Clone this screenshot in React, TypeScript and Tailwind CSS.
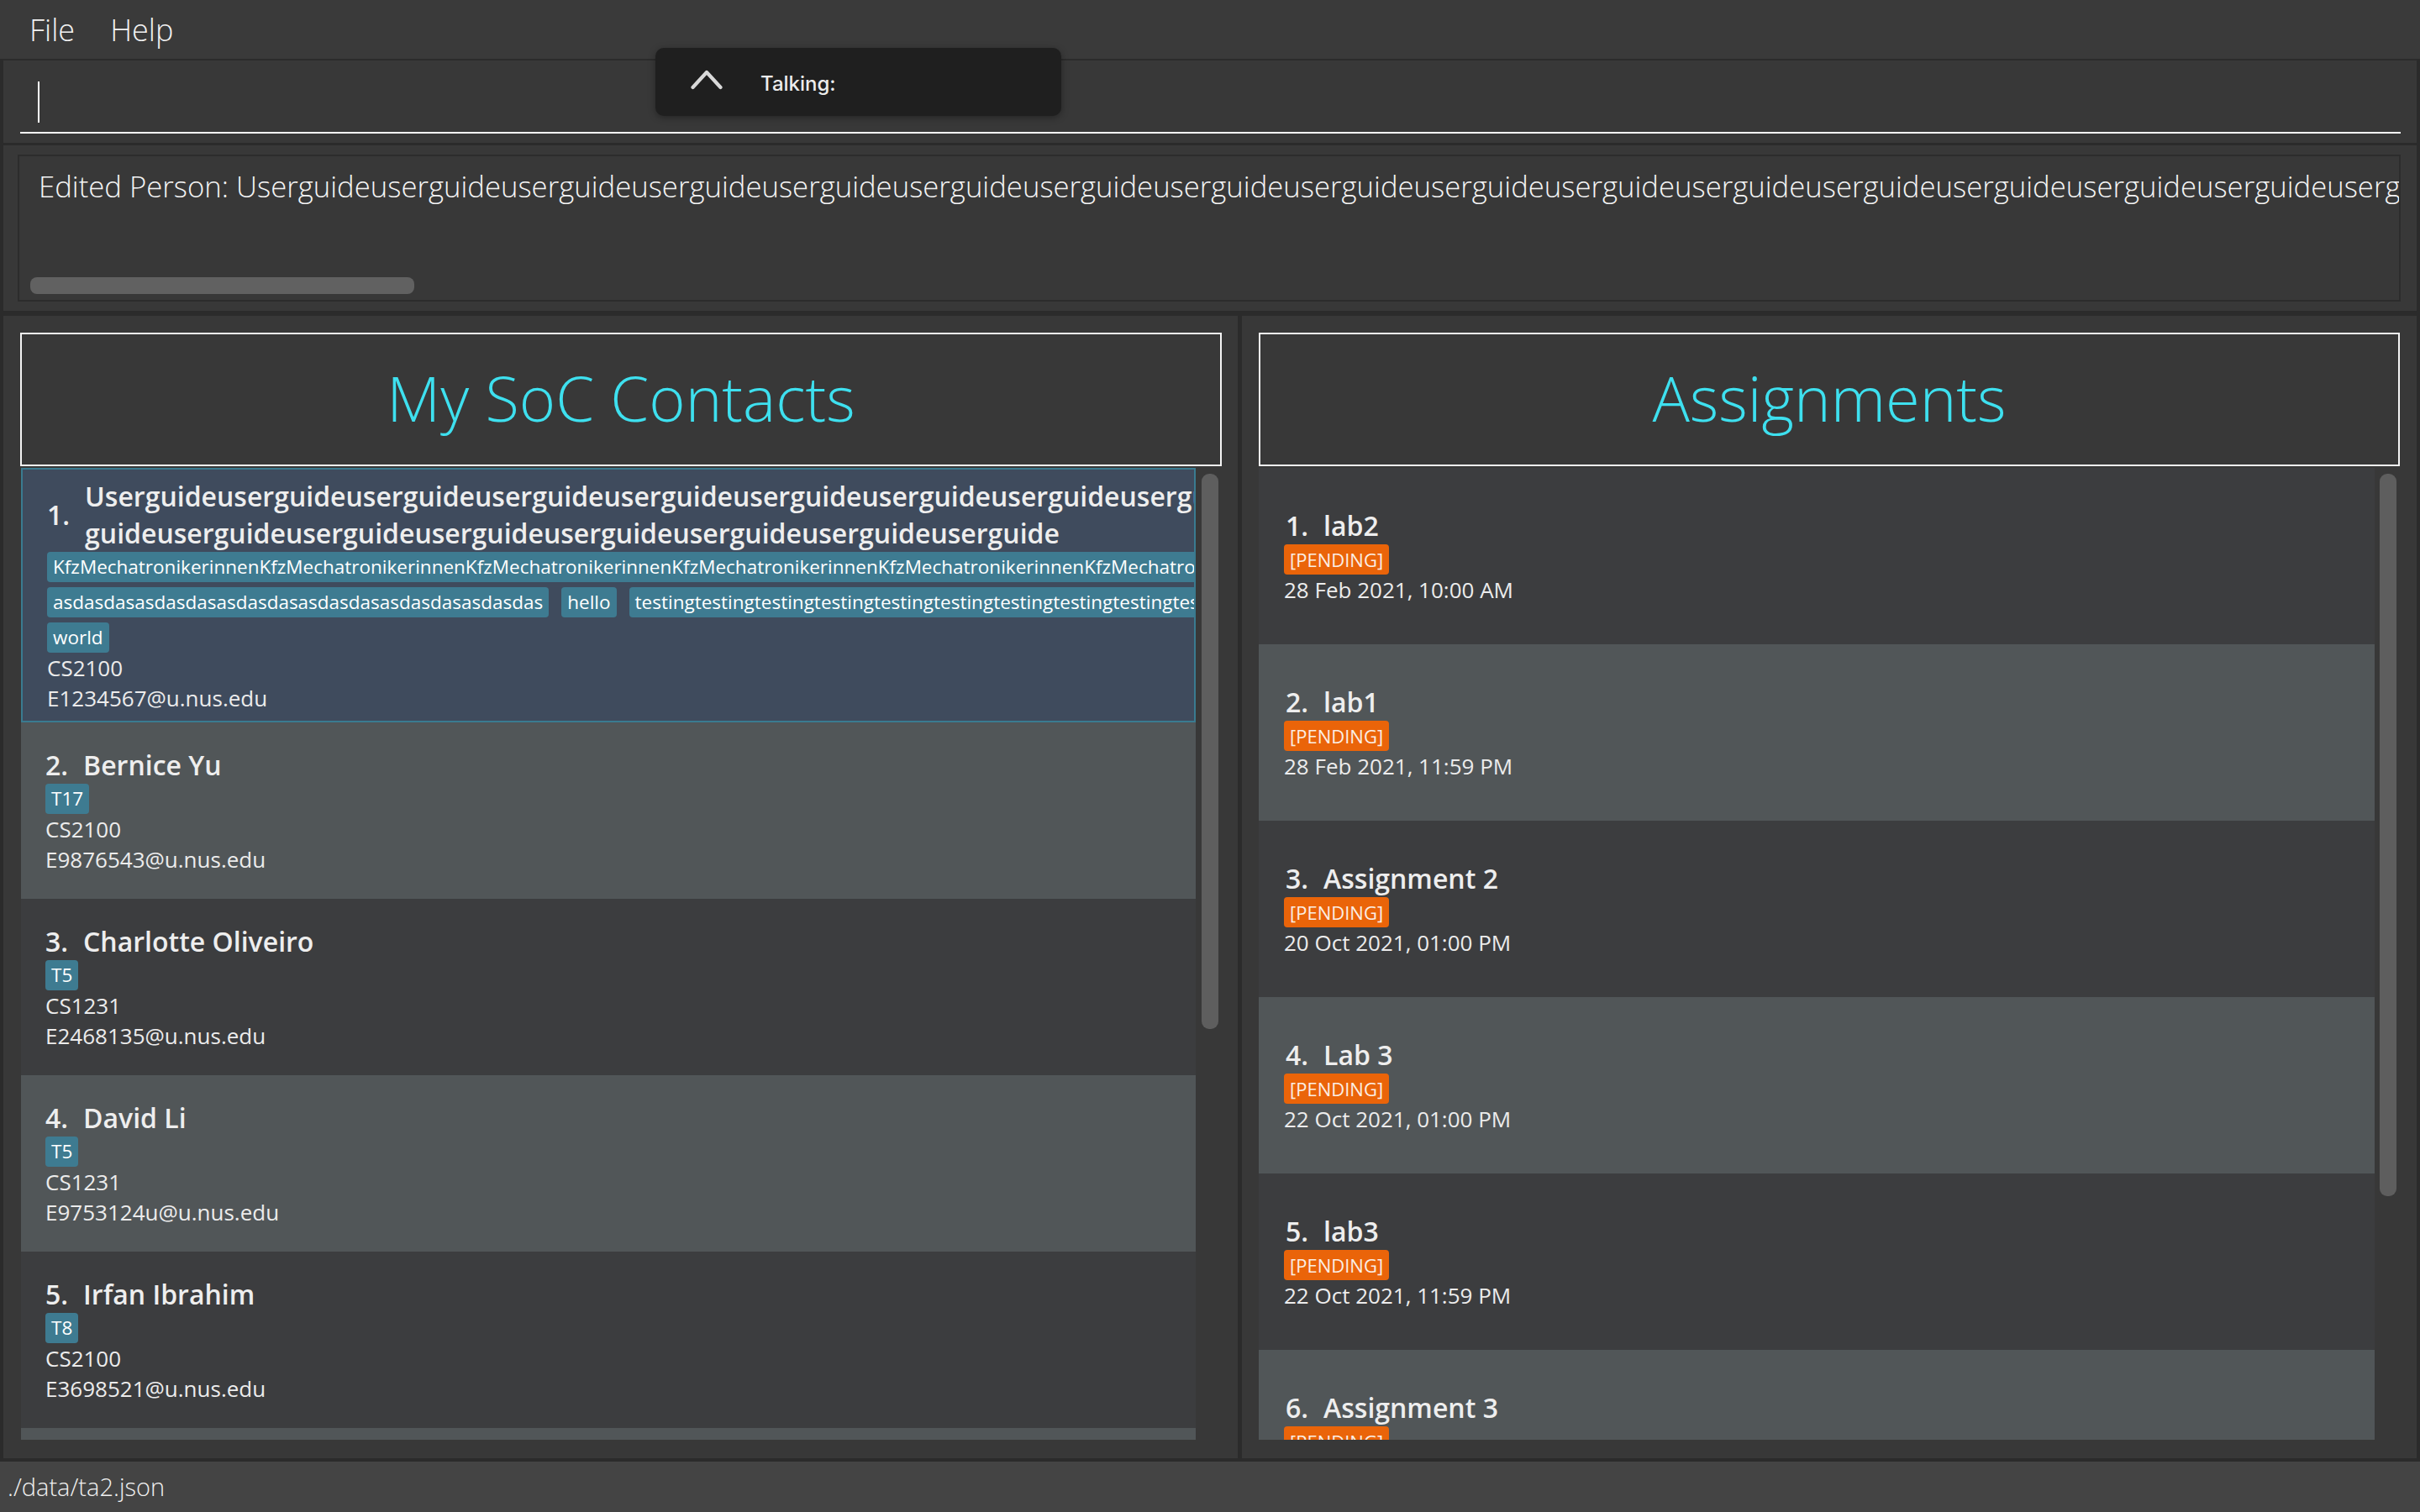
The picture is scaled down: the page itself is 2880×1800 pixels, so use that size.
import React from "react";

const contacts = [
  { id: 2, name: "Bernice Yu", tags: ["T17"], mod: "CS2100", email: "E9876543@u.nus.edu" },
  { id: 3, name: "Charlotte Oliveiro", tags: ["T5"], mod: "CS1231", email: "E2468135@u.nus.edu" },
  { id: 4, name: "David Li", tags: ["T5"], mod: "CS1231", email: "E9753124u@u.nus.edu" },
  { id: 5, name: "Irfan Ibrahim", tags: ["T8"], mod: "CS2100", email: "E3698521@u.nus.edu" },
  { id: 6, name: "Roy Balakrishnan", tags: ["T8"], mod: "CS2100", email: "E1357924@u.nus.edu" },
];

const assignments = [
  { id: 1, name: "lab2", date: "28 Feb 2021, 10:00 AM" },
  { id: 2, name: "lab1", date: "28 Feb 2021, 11:59 PM" },
  { id: 3, name: "Assignment 2", date: "20 Oct 2021, 01:00 PM" },
  { id: 4, name: "Lab 3", date: "22 Oct 2021, 01:00 PM" },
  { id: 5, name: "lab3", date: "22 Oct 2021, 11:59 PM" },
  { id: 6, name: "Assignment 3", date: "29 Oct 2021, 11:59 PM" },
];

function Tag({ text }: { text: string }) {
  return (
    <div className="h-[36px] leading-[36px] px-[7px] rounded-[4px] bg-[#3e7b91] text-[22.5px] text-white whitespace-nowrap shrink-0">
      {text}
    </div>
  );
}

function Detail({ text }: { text: string }) {
  return <div className="h-[36px] leading-[36px] text-[26px] text-[#ececec] whitespace-nowrap">{text}</div>;
}

export default function App() {
  const ug = "Userguide" + "userguide".repeat(14);
  const ug2 = "guide" + "userguide".repeat(7);
  const kfz = "KfzMechatronikerinnen".repeat(9);
  const asd = "asdasdas".repeat(6);
  const testing = "testing".repeat(20);
  const edited = "Edited Person: Userguide" + "userguide".repeat(30);

  return (
    <div className="w-[2880px] h-[1800px] bg-[#2b2b2b] flex flex-col overflow-hidden relative font-['Open_Sans',sans-serif]">
      {/* Menu bar */}
      <div className="h-[70px] bg-[#3a3a3a] flex items-center pl-[35px] pt-[2px] gap-[42px] text-[36px] font-light text-[#f2f2f2] shrink-0">
        <span>File</span>
        <span>Help</span>
      </div>

      {/* Command box */}
      <div className="mt-[2px] mx-[4px] h-[98px] bg-[#383838] shrink-0 flex flex-col pt-[25px]">
        <div className="ml-[41px] w-[2px] h-[49px] bg-white" />
        <div className="mt-[11px] ml-[20px] mr-[19px] h-[2px] bg-white" />
      </div>

      {/* Result display */}
      <div className="mt-[3px] mx-[4px] h-[197px] bg-[#383838] shrink-0 pt-[11px] pb-[11px] pl-[17px] pr-[19px]">
        <div className="h-full border-2 border-[#2c2c2c] flex flex-col overflow-hidden">
          <div className="pl-[23px] pt-[13px] text-[34.7px] font-light text-[#f4f4f4] whitespace-nowrap leading-[46px]">
            {edited}
          </div>
          <div className="flex-1" />
          <div className="ml-[13px] mb-[7px] w-[457px] h-[20px] rounded-[8px] bg-[#616161]" />
        </div>
      </div>

      {/* Main split */}
      <div className="mt-[6px] mx-[4px] h-[1360px] flex gap-[5px] shrink-0">
        {/* Left panel */}
        <div className="w-[1469px] h-full bg-[#383838] pt-[20px] pl-[20px] pr-[19px] flex flex-col">
          <div className="h-[159px] border-2 border-[#f4f4f4] flex items-center justify-center">
            <span className="text-[74px] font-light text-[#3ee0ef] leading-none pb-[4px]">My SoC Contacts</span>
          </div>
          <div className="mt-[2px] h-[1157px] flex overflow-hidden">
            <div className="ml-[1px] w-[1398px] flex flex-col">
              {/* Selected cell */}
              <div className="min-h-[303px] shrink-0 bg-[#3f4b5d] border-2 border-[#3a7b90] pl-[29px] py-[9px] flex items-center overflow-hidden">
                <div className="flex flex-col w-full">
                  <div className="flex items-center gap-[18px]">
                    <div className="text-[32px] font-semibold text-[#eeeeee] leading-[44px]">1.</div>
                    <div className="flex flex-col text-[32px] font-semibold text-[#eeeeee] leading-[44px] whitespace-nowrap">
                      <span>{ug}</span>
                      <span>{ug2}</span>
                    </div>
                  </div>
                  <div className="flex flex-col gap-[6px]">
                    <div className="flex gap-[15px]"><Tag text={kfz} /></div>
                    <div className="flex gap-[15px]">
                      <Tag text={asd} />
                      <Tag text="hello" />
                      <Tag text={testing} />
                    </div>
                    <div className="flex gap-[15px]"><Tag text="world" /></div>
                  </div>
                  <Detail text="CS2100" />
                  <Detail text="E1234567@u.nus.edu" />
                </div>
              </div>
              {contacts.map((c, i) => (
                <div
                  key={c.id}
                  className={
                    "min-h-[210px] shrink-0 pl-[29px] flex items-center overflow-hidden " +
                    (i % 2 === 0 ? "bg-[#515658]" : "bg-[#3c3d3f]")
                  }
                >
                  <div className="flex flex-col">
                    <div className="flex items-center gap-[18px] text-[32px] font-semibold text-[#eeeeee] leading-[44px] whitespace-nowrap">
                      <span>{c.id}.</span>
                      <span>{c.name}</span>
                    </div>
                    <div className="flex gap-[15px]">
                      {c.tags.map((t) => (
                        <Tag key={t} text={t} />
                      ))}
                    </div>
                    <Detail text={c.mod} />
                    <Detail text={c.email} />
                  </div>
                </div>
              ))}
            </div>
            <div className="w-[31px] pl-[7px] pt-[7px]">
              <div className="w-[20px] h-[661px] rounded-[9px] bg-[#5e5e5e]" />
            </div>
          </div>
        </div>

        {/* Right panel */}
        <div className="flex-1 h-full bg-[#383838] pt-[20px] px-[20px] flex flex-col">
          <div className="h-[159px] border-2 border-[#f4f4f4] flex items-center justify-center">
            <span className="text-[74px] font-light text-[#3ee0ef] leading-none pb-[4px]">Assignments</span>
          </div>
          <div className="mt-[2px] h-[1157px] flex overflow-hidden">
            <div className="w-[1328px] flex flex-col">
              {assignments.map((a, i) => (
                <div
                  key={a.id}
                  className={
                    "min-h-[210px] shrink-0 pl-[30px] flex items-center overflow-hidden " +
                    (i % 2 === 0 ? "bg-[#3c3d3f]" : "bg-[#515658]")
                  }
                >
                  <div className="flex flex-col items-start">
                    <div className="flex items-center gap-[18px] text-[32px] font-semibold text-[#eeeeee] leading-[44px] whitespace-nowrap pl-[2px]">
                      <span>{a.id}.</span>
                      <span>{a.name}</span>
                    </div>
                    <div className="h-[36px] leading-[36px] px-[7px] rounded-[4px] bg-[#ea6409] text-[22px] text-[#fbeee4] whitespace-nowrap">
                      [PENDING]
                    </div>
                    <Detail text={a.date} />
                  </div>
                </div>
              ))}
            </div>
            <div className="w-[30px] pl-[6px] pt-[7px]">
              <div className="w-[20px] h-[860px] rounded-[9px] bg-[#5e5e5e]" />
            </div>
          </div>
        </div>
      </div>

      {/* Status bar */}
      <div className="mt-[4px] h-[60px] bg-[#444444] flex items-center pl-[9px] text-[29px] font-light text-[#f0f0f0] shrink-0">
        ./data/ta2.json
      </div>

      {/* Talking popup */}
      <div className="absolute left-[780px] top-[57px] w-[483px] h-[81px] rounded-[10px] bg-[#1f1f1f] shadow-[0_2px_8px_rgba(0,0,0,0.35)] flex items-center">
        <svg className="ml-[42px] mb-[6px]" width="38" height="25" viewBox="0 0 38 25" fill="none">
          <path d="M2.5 22 L19 4 L35.5 22" stroke="#d9d9d9" strokeWidth="4.2" strokeLinecap="round" strokeLinejoin="round" />
        </svg>
        <span className="ml-[45px] pt-[4px] text-[24px] font-medium text-[#ececec] font-['Inter',sans-serif]">Talking:</span>
      </div>
    </div>
  );
}
